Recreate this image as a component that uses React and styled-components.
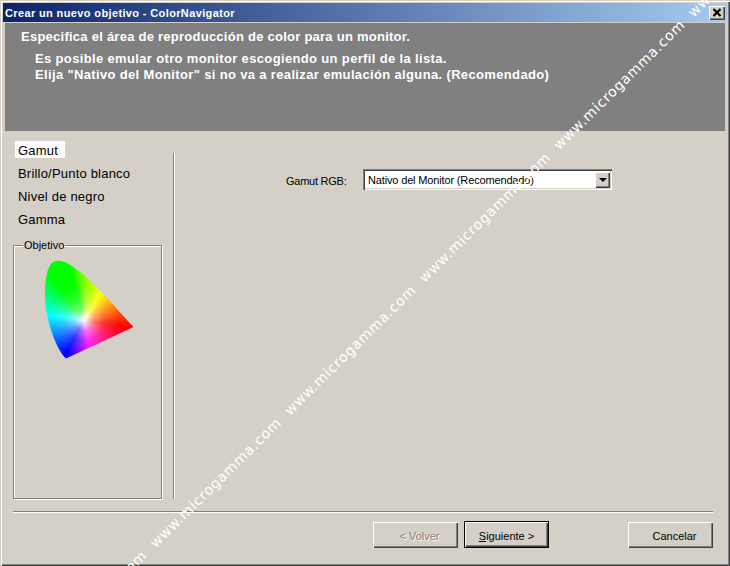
import styled, { createGlobalStyle } from "styled-components"

const Global = createGlobalStyle`
  html, body { margin: 0; padding: 0; background: #d4d0c8; }
  body { font-family: "Liberation Sans", Arial, sans-serif; }
`

const Window = styled.div`
  position: relative;
  box-sizing: border-box;
  width: 730px;
  height: 566px;
  overflow: hidden;
  padding: 3px;
  display: flex;
  flex-direction: column;
  background: #d4d0c8;
  box-shadow: inset 1px 1px 0 #d4d0c8, inset 2px 2px 0 #fff, inset -1px -1px 0 #404040, inset -2px -2px 0 #808080;
`
const TitleBar = styled.div`
  height: 19px;
  flex: none;
  display: flex;
  align-items: center;
  justify-content: space-between;
  padding: 0 2px 0 2px;
  background: linear-gradient(to right, #0a246a, #a6caf0);
  color: #fff;
  font-size: 11px;
  font-weight: bold;
  letter-spacing: 0.37px;
`
const CloseButton = styled.div`
  width: 16px;
  height: 14px;
  display: flex;
  align-items: center;
  justify-content: center;
  background: #d4d0c8;
  box-shadow: inset 1px 1px 0 #fff, inset -1px -1px 0 #404040, inset -2px -2px 0 #808080;
`
const Header = styled.div`
  flex: none;
  height: 108px;
  box-sizing: border-box;
  margin: 1px 0 0 2px;
  width: 720px;
  background: #808080;
  color: #fff;
  font-weight: bold;
  font-size: 13px;
  padding: 6px 0 0 16px;
`
const HeaderTitle = styled.div`
  line-height: 15px;
  letter-spacing: 0.25px;
`
const HeaderBody = styled.div`
  margin: 7px 0 0 14px;
  line-height: 16px;
  letter-spacing: 0.35px;
`
const Main = styled.div`
  flex: 1;
  display: flex;
  padding: 10px 0 0 10px;
`
const Sidebar = styled.div`
  width: 149px;
  display: flex;
  flex-direction: column;
`
const NavItem = styled.div`
  align-self: flex-start;
  height: 17px;
  line-height: 19px;
  margin: 0 0 6px 2px;
  padding: 0 3px;
  min-width: ${(p) => (p.$active ? "44px" : "0")};
  font-size: 13px;
  letter-spacing: 0.2px;
  color: #000;
  background: ${(p) => (p.$active ? "#fff" : "transparent")};
`
const GroupBox = styled.div`
  position: relative;
  margin-top: 12px;
  height: 254px;
  box-sizing: border-box;
  border: 1px solid #808080;
  box-shadow: 1px 1px 0 #fff, inset 1px 1px 0 #fff;
`
const GroupLabel = styled.span`
  position: absolute;
  left: 9px;
  top: -7px;
  padding: 0 1px;
  background: #d4d0c8;
  font-size: 11px;
  line-height: 13px;
  color: #000;
`
const Gamut = styled.div`
  position: absolute;
  left: 30px;
  top: 14px;
  width: 92px;
  height: 100px;
  clip-path: path("M22 98.5 C13 90 4 66 1.5 45 C0 30 1 12 7 4 C11 -1 19 0 28 6 C46 18 63 38 89.5 67 Z");
  background:
    radial-gradient(circle at 40px 60px, #fff 0, rgba(255,255,255,0.85) 3px, rgba(255,255,255,0.45) 10px, rgba(255,255,255,0.18) 20px, rgba(255,255,255,0) 36px),
    conic-gradient(from 0deg at 40px 60px, #80ff00 0deg, #ffff00 32deg, #ff0000 100deg, #ff00ff 170deg, #0000ff 208deg, #00ffff 278deg, #00ff00 325deg, #00ff00 345deg, #80ff00 360deg);
`
const VDivider = styled.div`
  width: 1px;
  margin: 12px 0 0 11px;
  height: 346px;
  background: #808080;
  box-shadow: 1px 0 0 #fff;
`
const Content = styled.div`
  flex: 1;
  display: flex;
  align-items: flex-start;
  padding: 28px 0 0 112px;
`
const FieldLabel = styled.label`
  width: 77px;
  padding-top: 6px;
  font-size: 11px;
  letter-spacing: -0.25px;
  color: #000;
`
const Combo = styled.div`
  box-sizing: border-box;
  width: 249px;
  height: 21px;
  display: flex;
  align-items: center;
  justify-content: space-between;
  padding: 2px 2px 2px 5px;
  background: #fff;
  font-size: 11px;
  letter-spacing: -0.15px;
  color: #000;
  box-shadow: inset 1px 1px 0 #808080, inset 2px 2px 0 #404040, inset -1px -1px 0 #fff, inset -2px -2px 0 #d4d0c8;
`
const ComboArrow = styled.div`
  width: 15px;
  height: 16px;
  display: flex;
  align-items: center;
  justify-content: center;
  background: #d4d0c8;
  box-shadow: inset 1px 1px 0 #fff, inset -1px -1px 0 #404040, inset -2px -2px 0 #808080;
  &::after {
    content: "";
    border: 4px solid transparent;
    border-top-color: #000;
    border-bottom-width: 0;
  }
`
const Footer = styled.div`
  flex: none;
  padding: 0 14px 0 10px;
  height: 52px;
  box-sizing: border-box;
`
const HRule = styled.div`
  height: 1px;
  background: #808080;
  box-shadow: 0 1px 0 #fff;
`
const ButtonRow = styled.div`
  display: flex;
  align-items: flex-start;
  margin-top: 9px;
  padding-left: 360px;
  gap: 6px;
`
const Button = styled.div`
  box-sizing: border-box;
  width: 85px;
  height: ${(p) => (p.$default ? "27px" : "26px")};
  margin-top: ${(p) => (p.$default ? "0" : "1px")};
  margin-left: ${(p) => (p.$push ? "73px" : "0")};
  padding: 2px 0 0 ${(p) => (p.$default ? "0" : "8px")};
  display: flex;
  align-items: center;
  justify-content: center;
  font-size: 11px;
  color: ${(p) => (p.$disabled ? "#808080" : "#000")};
  text-shadow: ${(p) => (p.$disabled ? "1px 1px 0 #fff" : "none")};
  box-shadow: ${(p) =>
    p.$default
      ? "inset 0 0 0 1px #000, inset 2px 2px 0 #fff, inset -2px -2px 0 #404040, inset -3px -3px 0 #808080"
      : "inset 1px 1px 0 #fff, inset -1px -1px 0 #404040, inset -2px -2px 0 #808080"};
`
const Watermark = styled.div`
  position: absolute;
  left: 0;
  top: 0;
  display: flex;
  gap: 11px;
  white-space: nowrap;
  color: #fff;
  font-family: "DejaVu Sans", sans-serif;
  font-size: 14px;
  letter-spacing: 0.75px;
  pointer-events: none;
  transform-origin: 0 0;
  transform: translate(12px, 672px) rotate(-44.6deg);
`

const marks = Array.from({ length: 6 }, (_, i) => i)

export default function App() {
  return (
    <Window>
      <Global />
      <TitleBar>
        Crear un nuevo objetivo - ColorNavigator
        <CloseButton>
          <svg width="10" height="9" viewBox="0 0 10 9">
            <path d="M1.5 1 L8.5 8 M8.5 1 L1.5 8" stroke="#000" strokeWidth="2.2" fill="none" />
          </svg>
        </CloseButton>
      </TitleBar>
      <Header>
        <HeaderTitle>Especifica el área de reproducción de color para un monitor.</HeaderTitle>
        <HeaderBody>
          Es posible emular otro monitor escogiendo un perfil de la lista.
          <br />
          Elija "Nativo del Monitor" si no va a realizar emulación alguna. (Recomendado)
        </HeaderBody>
      </Header>
      <Main>
        <Sidebar>
          <NavItem $active>Gamut</NavItem>
          <NavItem>Brillo/Punto blanco</NavItem>
          <NavItem>Nivel de negro</NavItem>
          <NavItem>Gamma</NavItem>
          <GroupBox>
            <GroupLabel>Objetivo</GroupLabel>
            <Gamut />
          </GroupBox>
        </Sidebar>
        <VDivider />
        <Content>
          <FieldLabel>Gamut RGB:</FieldLabel>
          <Combo>
            Nativo del Monitor (Recomendado)
            <ComboArrow />
          </Combo>
        </Content>
      </Main>
      <Footer>
        <HRule />
        <ButtonRow>
          <Button $disabled>&lt; Volver</Button>
          <Button $default>
            <span>
              <u>S</u>iguiente &gt;
            </span>
          </Button>
          <Button $push>Cancelar</Button>
        </ButtonRow>
      </Footer>
      <Watermark>
        {marks.map((i) => (
          <span key={i}>www.microgamma.com</span>
        ))}
      </Watermark>
    </Window>
  )
}
